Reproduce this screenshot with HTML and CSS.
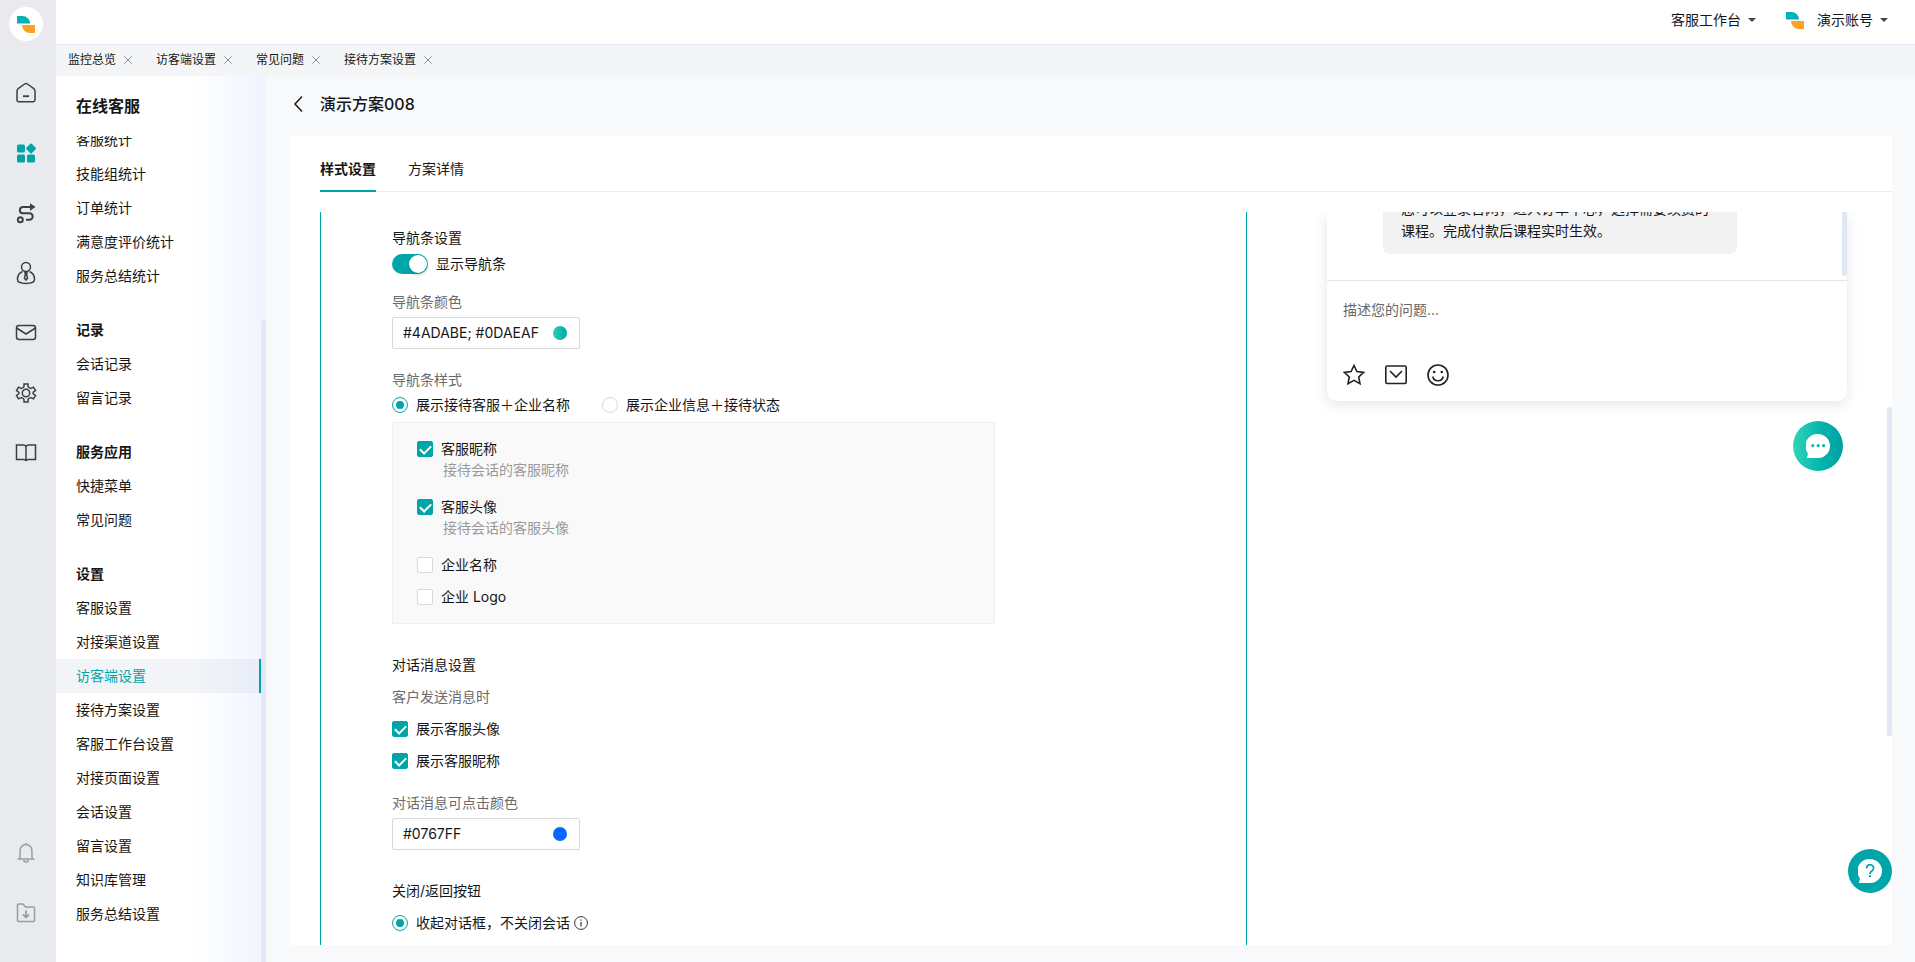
FILE: index.html
```html
<!DOCTYPE html>
<html lang="zh-CN">
<head>
<meta charset="utf-8">
<title>在线客服</title>
<link rel="stylesheet" href="styles.css">
</head>
<body>
<svg class="defs" width="0" height="0" aria-hidden="true">
  <symbol id="logo" viewBox="0 0 18 17"><path fill="#00b2b3" d="M0 0h5.500a7.500 7.500 0 0 1 7.500 7.500H0z"/><path fill="#ff9f24" d="M5 9h13v8h-5A8 8 0 0 1 5 9z"/></symbol>
  <symbol id="close" viewBox="0 0 8 8"><path d="M.3.300l7.400 7.400M7.700.300L.3 7.700" fill="none" stroke="#8d9095"/></symbol>
  <symbol id="caret" viewBox="0 0 8 4"><path d="M0 0h8L4 4z" fill="#444"/></symbol>
</svg>
<div class="app">
  <nav class="rail" aria-label="主导航">
    <a class="brand" href="#"><svg width="18" height="17"><use href="#logo"/></svg></a>
    <a class="rail-link" href="#" aria-label="首页"><svg width="22" height="22" viewBox="0 0 22 22"><path d="M2 9.200Q2 7.600 3.200 6.600L9.600 2q1.400-1 2.800 0l6.400 4.600Q20 7.600 20 9.200V18q0 1.700-1.700 1.700H3.700Q2 19.700 2 18z"/><path d="M8 14.200h6" stroke-width="1.800"/></svg></a>
    <a class="rail-link current" href="#" aria-label="应用"><svg width="22" height="22" viewBox="0 0 22 22"><rect x="2" y="2.500" width="8" height="8" rx="1.500"/><rect x="2" y="12.500" width="8" height="8" rx="1.500"/><rect x="12" y="12.500" width="8" height="8" rx="1.500"/><rect x="12.200" y="2.700" width="7.600" height="7.600" rx="1" transform="rotate(45 16 6.500)"/></svg></a>
    <a class="rail-link" href="#" aria-label="流程"><svg width="22" height="22" viewBox="0 0 22 22"><g stroke-width="2"><circle cx="5.300" cy="17.800" r="2.500"/><path d="M15 5H7.500a3.200 3.200 0 0 0 0 6.300h7a3.200 3.200 0 0 1 0 6.400H11"/></g><path d="M15 1.300L20.500 5 15 8.700z" fill="#3d3f42" stroke="none"/></svg></a>
    <a class="rail-link" href="#" aria-label="客户"><svg width="22" height="24" viewBox="0 0 22 24"><circle cx="11" cy="6" r="4.500"/><path d="M7.500 10.500C4 12 2.500 15.500 2.500 18.500c0 2.300 3 3.900 8.500 3.900s8.500-1.600 8.500-3.900c0-3-1.500-6.500-5-8M10 11.500h2l-.4 2 1 3.500-1.600 2-1.600-2 1-3.500z"/></svg></a>
    <a class="rail-link" href="#" aria-label="邮件"><svg width="22" height="22" viewBox="0 0 22 22"><rect x="1.500" y="3.500" width="19" height="14" rx="2.500"/><path d="M1.500 6L11 12l9.500-6"/></svg></a>
    <a class="rail-link" href="#" aria-label="设置"><svg width="22" height="22" viewBox="0 0 22 22"><circle cx="11" cy="11" r="3.700"/><path d="M9 1.900h4v2.300q0 .8.700 1.200l1.400.8q.7.400 1.400 0l2-1 2 3.400-1.900 1.300q-.6.500-.6 1.100t.6 1.100l1.900 1.300-2 3.400-2-1q-.7-.4-1.400 0l-1.400.8q-.7.400-.7 1.200v2.300H9v-2.300q0-.8-.7-1.200l-1.400-.8q-.7-.4-1.400 0l-2 1-2-3.400 1.900-1.300q.6-.5.6-1.100t-.6-1.100L1.500 8.600l2-3.400 2 1q.7.400 1.400 0l1.400-.8Q9 5 9 4.200z"/></svg></a>
    <a class="rail-link" href="#" aria-label="知识库"><svg width="22" height="22" viewBox="0 0 22 22"><path d="M11 4.500Q10 3 8.500 3h-7v14.500h7q1.500 0 2.500 1 1-1 2.500-1h7V3h-7Q12 3 11 4.500zM11 4.500v14"/></svg></a>
    <a class="rail-link muted" href="#" aria-label="通知"><svg width="22" height="22" viewBox="0 0 22 22"><path d="M2.500 17h17M4.500 17l.6-2.500V8.500a5.900 5.900 0 0 1 11.800 0v6l.6 2.500M8.500 18q.5 2 2.500 2t2.500-2M11 1v1.500"/></svg></a>
    <a class="rail-link muted" href="#" aria-label="下载"><svg width="22" height="22" viewBox="0 0 22 22"><path d="M3.500 2H8l2.500 3h8q1 0 1 1v12.500q0 1-1 1h-15q-1 0-1-1V3q0-1 1-1z"/><path d="M11 8.500v7M8 12.500l3 3 3-3" stroke-width="1.800"/></svg></a>
  </nav>

  <div class="shell">
    <header class="topbar">
      <button class="menu-button" type="button">客服工作台<svg width="8" height="4"><use href="#caret"/></svg></button>
      <button class="menu-button account" type="button"><svg class="account-logo" width="18" height="17"><use href="#logo"/></svg>演示账号<svg width="8" height="4"><use href="#caret"/></svg></button>
    </header>

    <div class="tabs">
      <div class="tab"><a href="#">监控总览</a><button type="button" aria-label="关闭监控总览"><svg width="8" height="8"><use href="#close"/></svg></button></div>
      <div class="tab"><a href="#">访客端设置</a><button type="button" aria-label="关闭访客端设置"><svg width="8" height="8"><use href="#close"/></svg></button></div>
      <div class="tab"><a href="#">常见问题</a><button type="button" aria-label="关闭常见问题"><svg width="8" height="8"><use href="#close"/></svg></button></div>
      <div class="tab"><a href="#">接待方案设置</a><button type="button" aria-label="关闭接待方案设置"><svg width="8" height="8"><use href="#close"/></svg></button></div>
    </div>

    <div class="workspace">
      <aside class="sidebar">
        <h1 class="sidebar-title">在线客服</h1>
        <div class="sidebar-scroll">
          <div class="menu">
            <div class="menu-group">
              <a href="#">客服统计</a>
              <a href="#">技能组统计</a>
              <a href="#">订单统计</a>
              <a href="#">满意度评价统计</a>
              <a href="#">服务总结统计</a>
            </div>
            <div class="menu-group">
              <h2>记录</h2>
              <a href="#">会话记录</a>
              <a href="#">留言记录</a>
            </div>
            <div class="menu-group">
              <h2>服务应用</h2>
              <a href="#">快捷菜单</a>
              <a href="#">常见问题</a>
            </div>
            <div class="menu-group">
              <h2>设置</h2>
              <a href="#">客服设置</a>
              <a href="#">对接渠道设置</a>
              <a href="#" class="active" aria-current="page">访客端设置</a>
              <a href="#">接待方案设置</a>
              <a href="#">客服工作台设置</a>
              <a href="#">对接页面设置</a>
              <a href="#">会话设置</a>
              <a href="#">留言设置</a>
              <a href="#">知识库管理</a>
              <a href="#">服务总结设置</a>
            </div>
          </div>
          <div class="sidebar-thumb"></div>
        </div>
      </aside>

      <main class="main">
        <div class="page-head">
          <button type="button" class="back" aria-label="返回"><svg width="10" height="18" viewBox="0 0 10 18"><path d="M9 1.500L2 9l7 7.500" fill="none" stroke="#222" stroke-width="1.600"/></svg></button>
          <h2>演示方案008</h2>
        </div>

        <section class="card">
          <div class="card-tabs">
            <a href="#" class="selected">样式设置</a>
            <a href="#">方案详情</a>
          </div>
          <div class="panes">
            <form class="settings">
              <h3 class="heading">导航条设置</h3>
              <label class="switch-row"><input type="checkbox" class="switch" checked>显示导航条</label>

              <label class="caption" for="nav-color">导航条颜色</label>
              <div class="color-field"><input id="nav-color" type="text" value="#4ADABE; #0DAEAF"><span class="swatch gradient"></span></div>

              <p class="caption style-caption">导航条样式</p>
              <div class="radio-row">
                <label class="choice"><input type="radio" name="style" checked>展示接待客服＋企业名称</label>
                <label class="choice"><input type="radio" name="style">展示企业信息＋接待状态</label>
              </div>
              <div class="option-box">
                <div class="option">
                  <label class="choice"><input type="checkbox" checked>客服昵称</label>
                  <p class="hint">接待会话的客服昵称</p>
                </div>
                <div class="option">
                  <label class="choice"><input type="checkbox" checked>客服头像</label>
                  <p class="hint">接待会话的客服头像</p>
                </div>
                <label class="choice"><input type="checkbox">企业名称</label>
                <label class="choice"><input type="checkbox">企业 Logo</label>
              </div>

              <h3 class="heading section">对话消息设置</h3>
              <div class="stack">
                <p class="caption">客户发送消息时</p>
                <label class="choice"><input type="checkbox" checked>展示客服头像</label>
                <label class="choice"><input type="checkbox" checked>展示客服昵称</label>
              </div>

              <label class="caption link-caption" for="link-color">对话消息可点击颜色</label>
              <div class="color-field"><input id="link-color" type="text" value="#0767FF"><span class="swatch blue"></span></div>

              <h3 class="heading section">关闭/返回按钮</h3>
              <div class="close-row">
                <label class="choice"><input type="radio" name="close" checked>收起对话框，不关闭会话</label>
                <svg width="14" height="14" viewBox="0 0 14 14" fill="none" stroke="#333"><circle cx="7" cy="7" r="6.400"/><path d="M7 6v4.500M7 3.500v1.200" stroke-width="1.200"/></svg>
              </div>
            </form>

            <div class="preview">
              <div class="chat">
                <div class="chat-log">
                  <p class="message">您可以登录官网，进入订单中心，选择需要续费的课程。完成付款后课程实时生效。</p>
                  <div class="chat-thumb"></div>
                </div>
                <div class="composer">
                  <textarea aria-label="消息" placeholder="描述您的问题..." rows="2"></textarea>
                  <div class="tools">
                    <button type="button" aria-label="评价"><svg width="22" height="22" viewBox="0 0 22 22"><path d="M11 1.500l2.900 6.100 6.700.8-4.900 4.600 1.300 6.600-6-3.300-6 3.300L6.300 13 1.400 8.400l6.700-.8z"/></svg></button>
                    <button type="button" aria-label="留言"><svg width="22" height="22" viewBox="0 0 22 22"><rect x=".8" y="2" width="20.400" height="17.500" rx="1.500"/><path d="M5 7l6 6 6-6"/></svg></button>
                    <button type="button" aria-label="表情"><svg width="22" height="22" viewBox="0 0 22 22"><circle cx="11" cy="11" r="10"/><path d="M5.800 12.500a5.300 5.300 0 0 0 10.400 0"/><circle cx="7.200" cy="8" r="1.300" fill="#222" stroke="none"/><circle cx="14.800" cy="8" r="1.300" fill="#222" stroke="none"/></svg></button>
                  </div>
                </div>
              </div>
              <button type="button" class="launcher" aria-label="打开对话"><svg width="24" height="24" viewBox="0 0 24 24"><path fill="#fff" d="M12 0a12 12 0 0 1 0 24H1.300q-.6 0-.4-.6l.9-2.800q.3-1-.3-1.900A12 12 0 0 1 12 0z"/><g fill="#10b8ae"><circle cx="6.800" cy="11.700" r="1.600"/><circle cx="12.200" cy="11.700" r="1.600"/><circle cx="17.600" cy="11.700" r="1.600"/></g></svg></button>
            </div>
            <div class="card-thumb"></div>
          </div>
        </section>
      </main>
    </div>
  </div>
  <button type="button" class="help" aria-label="帮助"><svg width="24" height="24" viewBox="0 0 24 24"><path fill="#fff" d="M12 0a12 12 0 0 1 0 24H1.300q-.6 0-.4-.6l.9-2.800q.3-1-.3-1.900A12 12 0 0 1 12 0z"/><path fill="none" stroke="#00a6a7" stroke-width="1.800" d="M8.600 9.200a3.500 3.300 0 1 1 5.800 2.300Q12 13 12 15"/><path fill="#00a6a7" d="M11 16.200h2v2h-2z"/></svg></button>
</div>
</body>
</html>
```

FILE: styles.css
```css
* { box-sizing: border-box; }

:root {
  --teal: #00a6a7;
  --text: #161616;
  --thumb: #e1e7f4;
}

body {
  margin: 0;
  color: var(--text);
  background: #f8f9fb;
  font: 14px/22px Inter, "Noto Sans CJK SC", sans-serif;
}

h1, h2, h3, p { margin: 0; font-size: 14px; }
a { color: inherit; text-decoration: none; }
button { margin: 0; padding: 0; border: 0; background: none; color: inherit; font: inherit; cursor: pointer; }
svg { display: block; flex: none; }
.defs { position: absolute; }

.app { display: flex; height: 100vh; overflow: hidden; }

/* icon rail */
.rail { display: flex; flex-direction: column; align-items: center; flex: none; width: 56px; padding: 7px 4px 19px 0; background: #e8eaee; }
.brand { display: flex; align-items: center; justify-content: center; width: 34px; height: 34px; margin-bottom: 22px; border-radius: 50%; background: #fff; }
.rail-link { display: flex; align-items: center; justify-content: center; width: 40px; height: 60px; }
.rail-link svg { fill: none; stroke: #3d3f42; stroke-width: 1.5; }
.rail-link.current svg { fill: var(--teal); stroke: none; }
.rail-link.muted svg { stroke: #9b9da1; }
.rail-link.muted:nth-last-child(2) { margin-top: auto; }

.shell { display: flex; flex: 1; flex-direction: column; min-width: 0; }

.topbar { display: flex; align-items: center; justify-content: flex-end; gap: 30px; flex: none; height: 45px; padding: 0 27px 4px 0; border-bottom: 1px solid #e6eaf4; background: #fff; }
.menu-button { display: flex; align-items: center; gap: 7px; }
.account-logo { margin-right: 6px; }

.tabs { display: flex; flex: none; height: 31px; background: #f4f5f7; font-size: 12px; }
.tab { display: flex; align-items: center; gap: 8px; padding: 0 12px 2px; }

.workspace { display: flex; flex: 1; min-height: 0; }

/* section menu */
.sidebar { display: flex; flex-direction: column; flex: none; width: 210px; background: linear-gradient(90deg, #fff 65%, #f0f4ff); }
.sidebar-title { flex: none; height: 60px; padding-left: 20px; font-size: 16px; line-height: 60px; }
.sidebar-scroll { display: flex; flex: 1; min-height: 0; overflow: hidden; }
.menu { display: flex; flex: 1; flex-direction: column; gap: 20px; margin-top: -13px; }
.menu-group a, .menu-group h2 { display: block; height: 34px; padding-left: 20px; line-height: 34px; }
.menu-group .active { border-right: 2px solid var(--teal); background: rgba(200, 207, 220, 0.24); color: var(--teal); }
.sidebar-thumb { width: 5px; margin-top: 184px; border-radius: 3px 3px 0 0; background: var(--thumb); }

/* page */
.main { display: flex; flex: 1; flex-direction: column; min-width: 0; padding: 0 23px 17px 24px; }
.page-head { display: flex; align-items: center; gap: 17px; flex: none; height: 60px; padding: 0 0 4px 3px; }
.page-head h2 { font-size: 16px; font-weight: 500; }
.card { display: flex; flex: 1; flex-direction: column; min-height: 0; background: #fff; }
.card-tabs { display: flex; gap: 32px; flex: none; height: 56px; margin: 0 0 0 30px; border-bottom: 1px solid #eee; }
.card-tabs a { height: 56px; padding-top: 12px; line-height: 42px; }
.card-tabs .selected { border-bottom: 2px solid var(--teal); font-weight: 700; }
.panes { display: flex; flex: 1; min-height: 0; margin-top: 20px; padding-left: 30px; overflow: hidden; }

.settings { flex: 1; padding: 15px 71px 0; border: solid var(--teal); border-width: 0 1px; }
.heading { font-weight: 400; }
.caption { display: block; color: #6b6b6b; }
.switch-row { display: flex; align-items: center; gap: 8px; height: 20px; margin: 5px 0 17px; }
.switch { position: relative; width: 36px; height: 20px; margin: 0; border-radius: 10px; background: var(--teal); appearance: none; }
.switch::after { content: ""; position: absolute; top: 1px; right: 1px; width: 18px; height: 18px; border-radius: 50%; background: #fff; box-shadow: 0 2px 3px rgba(0, 35, 11, 0.2); }
.color-field { display: flex; align-items: center; width: 188px; height: 32px; margin-top: 4px; padding: 0 12px 0 10px; border: 1px solid #d9d9d9; border-radius: 2px; }
.color-field input { flex: 1; min-width: 0; padding: 0; border: 0; outline: 0; background: none; color: inherit; font: inherit; }
.swatch { width: 14px; height: 14px; border-radius: 50%; }
.gradient { background: linear-gradient(90deg, #2bd0b4, #00a6a7); }
.blue { background: #0767ff; }
.style-caption { margin-top: 20px; }
.radio-row { display: flex; gap: 32px; margin: 3px 0 6px; }

.choice { display: flex; align-items: center; gap: 8px; height: 22px; }
.choice input { display: grid; place-items: center; flex: none; width: 16px; height: 16px; margin: 0; border: 1px solid #d9d9d9; border-radius: 2px; background: #fff; appearance: none; }
.choice input[type="radio"] { border-radius: 50%; }
.choice input[type="radio"]:checked { border-color: var(--teal); }
.choice input[type="radio"]:checked::after { content: ""; width: 8px; height: 8px; border-radius: 50%; background: var(--teal); }
.choice input[type="checkbox"]:checked { border-color: var(--teal); background: var(--teal); }
.choice input[type="checkbox"]:checked::after { content: ""; width: 5px; height: 9px; margin-bottom: 2px; border: solid #fff; border-width: 0 2px 2px 0; transform: rotate(45deg); }

.option-box { display: flex; flex-direction: column; gap: 10px; max-width: 603px; padding: 15px 24px; border: 1px solid #eee; border-radius: 2px; background: #f9f9f9; }
.option { padding-bottom: 6px; }
.hint { padding-left: 26px; color: #999; line-height: 20px; }
.section { margin-top: 30px; }
.stack { display: flex; flex-direction: column; gap: 10px; margin-top: 10px; }
.link-caption { margin-top: 20px; }
.close-row { display: flex; align-items: center; gap: 4px; margin-top: 10px; }

/* chat preview */
.preview { display: flex; flex-direction: column; flex: none; width: 640px; padding: 0 40px 0 80px; }
.chat { flex: none; border-radius: 0 0 10px 10px; box-shadow: 0 4px 14px rgba(0, 0, 0, 0.1); }
.chat-log { display: flex; justify-content: space-between; height: 69px; padding-left: 56px; border-bottom: 1px solid #e6e6e6; }
.message { width: 354px; height: 66px; margin-top: -24px; padding: 10px 18px 12px; border-radius: 6px; background: #f2f2f2; }
.chat-thumb { width: 5px; height: 64px; border-radius: 0 0 3px 3px; background: var(--thumb); }
.composer { padding: 18px 16px 15px; }
.composer textarea { display: block; width: 100%; height: 46px; padding: 0; border: 0; outline: 0; resize: none; color: inherit; font: inherit; }
.composer textarea::placeholder { color: #666; }
.tools { display: flex; gap: 20px; margin-top: 19px; }
.tools svg { fill: none; stroke: #222; stroke-width: 1.6; }
.launcher { display: grid; place-items: center; flex: none; align-self: flex-end; width: 50px; height: 50px; margin: 20px 4px 0 0; border-radius: 50%; background: linear-gradient(90deg, #31d5b8, #00b2ac 60%, #00a0a3); }
.card-thumb { flex: none; width: 5px; height: 329px; margin-top: 195px; border-radius: 3px; background: var(--thumb); }

/* floating help */
.help { position: fixed; right: 23px; bottom: 69px; display: grid; place-items: center; width: 44px; height: 44px; border-radius: 50%; background: var(--teal); }
```
